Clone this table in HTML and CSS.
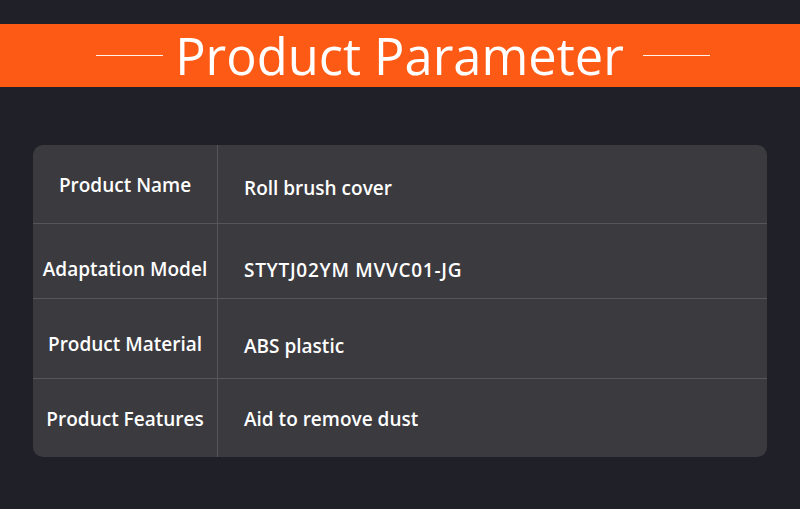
FILE: index.html
```html
<!DOCTYPE html>
<html>
<head>
<meta charset="utf-8">
<link rel="stylesheet" href="styles.css">
</head>
<body>
<header class="banner">
  <span class="rule"></span>
  <h1 class="title">Product Parameter</h1>
  <span class="rule"></span>
</header>
<section class="params">
  <div class="row r1"><div class="key s1">Product Name</div><div class="val s4">Roll brush cover</div></div>
  <div class="row r2"><div class="key s8">Adaptation Model</div><div class="val s9 wide">STYTJ02YM MVVC01-JG</div></div>
  <div class="row r3"><div class="key s5">Product Material</div><div class="val s7">ABS plastic</div></div>
  <div class="row r4"><div class="key s1">Product Features</div><div class="val s1">Aid to remove dust</div></div>
</section>
</body>
</html>
```
FILE: styles.css
```css
html, body {
  margin: 0;
  padding: 0;
  background: #202028;
  width: 800px;
  height: 509px;
  overflow: hidden;
  font-family: "Open Sans", "Noto Sans", sans-serif;
}
.banner {
  margin-top: 24px;
  height: 63px;
  background: #fd5a15;
  display: flex;
  align-items: center;
  justify-content: center;
  gap: 12px;
  padding-left: 6px;
  box-sizing: border-box;
}
.rule {
  display: block;
  width: 67px;
  height: 1px;
  background: #fff2ea;
}
.title {
  margin: 0 7px 0 0;
  color: #fff;
  font-weight: 400;
  font-size: 50.6px;
  line-height: 63px;
}
.params {
  margin: 58px 0 0 33px;
  width: 734px;
  background: #3b3a3e;
  border-radius: 10px;
  overflow: hidden;
}
.row {
  display: grid;
  grid-template-columns: 185px 1fr;
  border-bottom: 1px solid #56555a;
  color: #fff;
  font-size: 19px;
  font-weight: 600;
}
.row:last-child { border-bottom: none; }
.r1 { height: 78px; }
.r2 { height: 74px; }
.r3 { height: 79px; }
.r4 { height: 78px; }
.key {
  border-right: 1px solid #56555a;
  display: flex;
  align-items: center;
  justify-content: center;
  white-space: nowrap;
  box-sizing: border-box;
}
.val {
  display: flex;
  align-items: center;
  padding-left: 26px;
  box-sizing: border-box;
}
.wide { letter-spacing: 0.7px; }
.s1 { padding-top: 2px; }
.s4 { padding-top: 8px; }
.s5 { padding-top: 10px; }
.s7 { padding-top: 14px; }
.s8 { padding-top: 16px; }
.s9 { padding-top: 18px; }
```
